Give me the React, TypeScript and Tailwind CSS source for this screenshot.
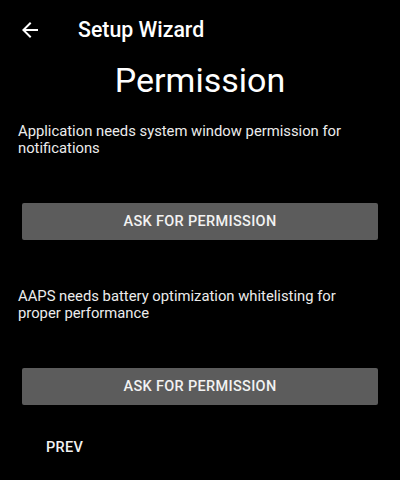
export default function App() {
    return (
        <div
            className="flex h-[480px] w-[400px] flex-col overflow-hidden bg-black text-white"
            style={{ fontFamily: 'Roboto, "Noto Sans", sans-serif' }}
        >
            <header className="mt-[2px] flex h-[56px] items-center">
                <div className="ml-[18px] flex h-6 w-6 items-center justify-center">
                    <svg width="24" height="24" viewBox="0 0 24 24" fill="white">
                        <path d="M20 11H7.83l5.59-5.59L12 4l-8 8 8 8 1.41-1.41L7.83 13H20v-2z" />
                    </svg>
                </div>
                <h1 className="ml-[36px] text-[21.3px] font-medium">Setup Wizard</h1>
            </header>
            <h2 className="mt-[2px] text-center text-[34px] leading-[40px]">Permission</h2>
            <p className="mt-[23px] px-[18px] text-[14.8px] leading-[17px] text-[#ececec]">
                Application needs system window permission for notifications
            </p>
            <div className="mt-[46px] px-[22px]">
                <button className="h-[37px] w-full rounded-[2px] bg-[#5c5c5c] text-[14.5px] font-medium tracking-[0.33px] text-[#f2f2f2] shadow-[-1px_1px_2px_rgba(0,0,0,0.6)]">
                    ASK FOR PERMISSION
                </button>
            </div>
            <p className="mt-[48px] px-[18px] text-[14.8px] leading-[17px] text-[#ececec]">
                AAPS needs battery optimization whitelisting for proper performance
            </p>
            <div className="mt-[46px] px-[22px]">
                <button className="h-[37px] w-full rounded-[2px] bg-[#5c5c5c] text-[14.5px] font-medium tracking-[0.33px] text-[#f2f2f2] shadow-[-1px_1px_2px_rgba(0,0,0,0.6)]">
                    ASK FOR PERMISSION
                </button>
            </div>
            <div className="mt-[30px] pl-[46px]">
                <span className="text-[14.5px] font-medium tracking-[0.33px] text-[#f2f2f2]">PREV</span>
            </div>
        </div>
    );
}
